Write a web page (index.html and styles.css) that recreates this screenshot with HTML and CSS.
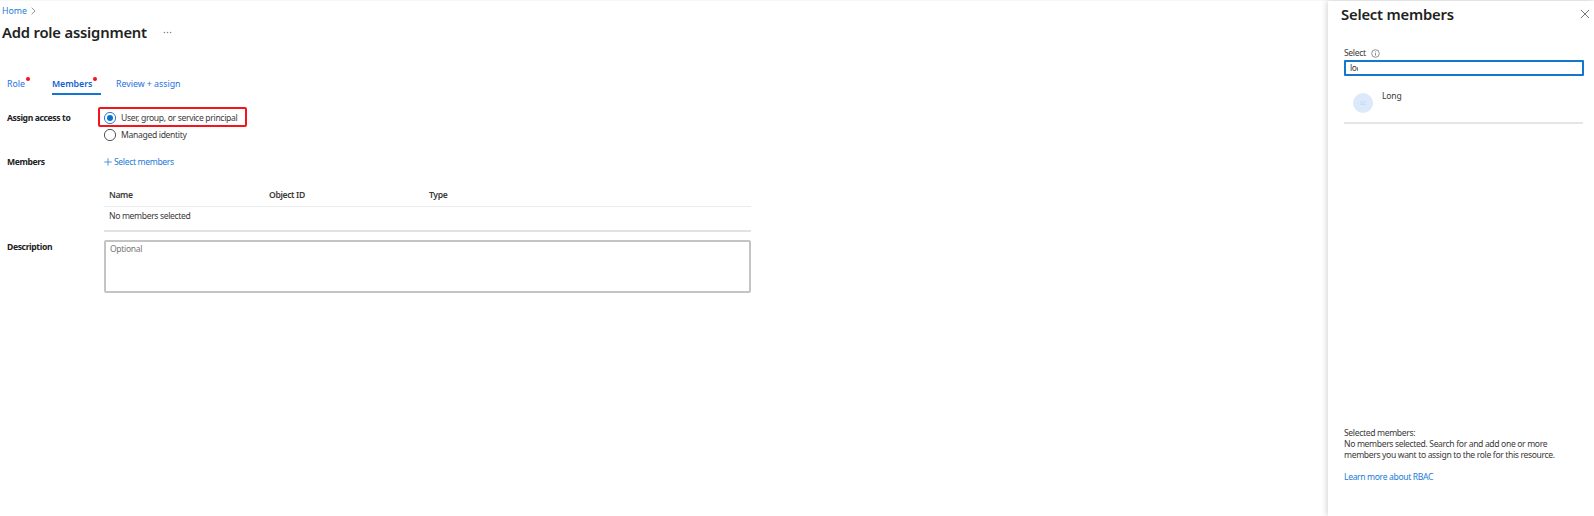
FILE: index.html
```
<!DOCTYPE html>
<html lang="en">
<head>
<meta charset="utf-8">
<title>Add role assignment</title>
<link rel="stylesheet" href="styles.css">
</head>
<body>
<div class="app">
  <main class="page">
    <nav class="crumbs"><a class="home">Home</a>
      <svg class="chevron" width="5" height="8" viewBox="0 0 5 8"><path d="M.7.8 4 4 .7 7.2" fill="none" stroke="#888" stroke-width=".9"/></svg>
    </nav>
    <header class="heading"><h1>Add role assignment</h1>
      <svg class="more" width="10" height="3" viewBox="0 0 10 3" fill="#888"><circle cx="1.4" cy="1.5" r=".8"/><circle cx="4.5" cy="1.5" r=".8"/><circle cx="7.6" cy="1.5" r=".8"/></svg>
    </header>
    <div class="tabs">
      <a class="tab role"><span>Role</span><i class="dot"></i></a>
      <a class="tab active"><span>Members</span><i class="dot"></i></a>
      <a class="tab review"><span>Review + assign</span></a>
    </div>
    <section class="row access">
      <h2>Assign access to</h2>
      <div class="radios">
        <label class="option marked"><svg width="14" height="14" viewBox="0 0 14 14"><circle cx="7" cy="7" r="5.6" fill="#fff" stroke="#2b7fd0" stroke-width="1"/><circle cx="7" cy="7" r="3" fill="#0b6fd0"/></svg><span>User, group, or service principal</span></label>
        <label class="option"><svg width="14" height="14" viewBox="0 0 14 14"><circle cx="7" cy="7" r="5.6" fill="#fff" stroke="#555" stroke-width="1"/></svg><span>Managed identity</span></label>
      </div>
    </section>
    <section class="row members">
      <h2>Members</h2>
      <a class="add"><svg width="8" height="8" viewBox="0 0 8 8"><path d="M4 .3v7.4M.3 4h7.4" stroke="#3a8dd8" stroke-width=".9"/></svg><span>Select members</span></a>
    </section>
    <div class="table">
      <div class="thead"><span>Name</span><span>Object ID</span><span>Type</span></div>
      <div class="tbody"><span>No members selected</span></div>
    </div>
    <section class="row description">
      <h2>Description</h2>
      <div class="textarea"><span>Optional</span></div>
    </section>
  </main>
  <aside class="panel">
    <header class="panel-head"><h1>Select members</h1>
      <svg width="10" height="10" viewBox="0 0 10 10"><path d="m.9.9 8.2 8.2M9.1.9.9 9.1" stroke="#666" stroke-width=".9"/></svg>
    </header>
    <div class="field-label"><span>Select</span>
      <svg width="9" height="9" viewBox="0 0 9 9"><circle cx="4.5" cy="4.5" r="3.8" fill="none" stroke="#777" stroke-width=".8"/><path d="M4.5 4v2.6M4.5 2.4v.9" stroke="#777" stroke-width=".8"/></svg>
    </div>
    <div class="input"><span>lo</span><i class="caret"></i></div>
    <div class="person"><span class="avatar">LC</span><span class="person-name">Long</span></div>
    <footer class="selected">
      <p>Selected members:</p>
      <p>No members selected. Search for and add one or more</p>
      <p>members you want to assign to the role for this resource.</p>
      <p class="learn"><a>Learn more about RBAC</a></p>
    </footer>
  </aside>
</div>
</body>
</html>
```
FILE: styles.css
```
* { box-sizing: border-box; margin: 0; padding: 0; }
body { width: 1594px; height: 516px; overflow: hidden; background: #fff; color: #3b3a39; font: 8.6px/12px "Noto Sans", "Open Sans", sans-serif; letter-spacing: -.36px; }
svg { display: block; flex: none; }
a { color: #1b7cd6; }
span, h1, h2, a, p { white-space: nowrap; }
.app { display: flex; height: 516px; border-top: 1px solid #f7f7f7; }
.page { flex: 1; }
.crumbs { display: flex; align-items: center; height: 12px; margin: 4px 0 0 2px; gap: 4px; font-size: 8.8px; letter-spacing: -.05px; }
.heading { display: flex; align-items: center; height: 22px; margin: 4px 0 0 2px; gap: 16px; }
h1 { font-size: 14.8px; line-height: 22px; font-weight: 600; letter-spacing: -.2px; color: #222; }
.tabs { display: flex; margin: 32px 0 0 7px; height: 20px; font-size: 8.8px; letter-spacing: -.02px; }
.tab { display: flex; height: 20px; padding-top: 3px; color: #2570e0; }
.tab .dot { width: 4px; height: 4px; border-radius: 50%; background: #f5121d; margin: -1px 0 0 1px; }
.role { width: 45px; }
.active { width: 49px; border-bottom: 2px solid #1474d4; color: #145fd2; font-weight: 600; letter-spacing: -.05px; }
.review { margin-left: 15px; }
.row { display: flex; padding-left: 7px; }
h2 { width: 97px; font-size: 8.6px; line-height: 12px; font-weight: 700; letter-spacing: -.38px; color: #222; }
.access { margin-top: 12px; }
.access h2 { width: 91px; margin-top: 5px; }
.option { display: flex; align-items: center; width: 149px; height: 15px; padding-left: 5px; gap: 4px; letter-spacing: -.33px; }
.marked { height: 20px; border: 2px solid #f3151b; border-radius: 2px; padding: 1px 0 0 3px; }
.members { margin-top: 14px; }
.add { display: flex; align-items: center; height: 12px; gap: 2px; }
.table { width: 647px; margin: 18px 0 0 104px; }
.thead { display: grid; grid-template-columns: 160px 160px 1fr; height: 21px; padding: 3px 0 0 5px; border-bottom: 1px solid #ebebeb; font-weight: 600; }
.tbody { height: 25px; padding: 3px 0 0 5px; border-bottom: 2px solid #e2e2e2; }
.description { margin-top: 8px; }
.description h2 { margin-top: 1px; }
.textarea { width: 647px; height: 53px; padding: 1px 4px; border: 2px solid #c4c4c4; border-radius: 2px; color: #777; }
.panel { width: 266px; padding-left: 13px; background: #fff; box-shadow: -1px 0 6px rgba(0,0,0,.18); }
.panel-head { display: flex; justify-content: space-between; align-items: center; height: 22px; padding-right: 4px; margin-top: 2px; }
.field-label { display: flex; align-items: center; gap: 5px; height: 12px; margin: 22px 0 0 3px; }
.input { display: flex; width: 240px; height: 16px; margin: 1px 0 0 3px; padding: 0 4px; border: 2px solid #1477cf; border-radius: 1px; line-height: 13px; }
.caret { width: 2px; height: 4px; margin-top: 5px; border-left: 1px solid #777; border-radius: 1px; }
.person { display: flex; height: 48px; width: 239px; margin-left: 3px; padding: 17px 0 0 9px; border-bottom: 2px solid #e5e5e5; }
.avatar { width: 20px; height: 20px; border-radius: 50%; background: #dbe9fb; color: #c3d2e6; font-size: 6px; line-height: 20px; text-align: center; }
.person-name { margin: -3px 0 0 9px; letter-spacing: -.2px; }
.selected { margin: 304px 0 0 3px; line-height: 11px; }
.selected p { height: 11px; }
.selected .learn { margin-top: 11px; }
```
